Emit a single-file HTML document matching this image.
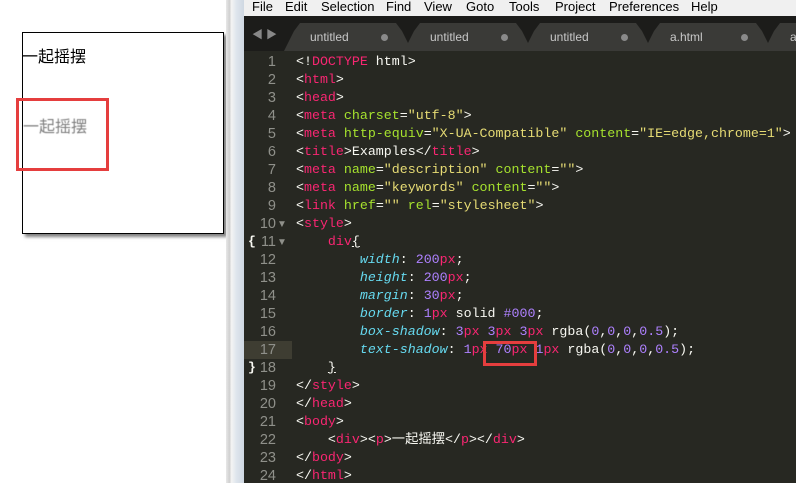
<!DOCTYPE html><html><head><meta charset="utf-8"><style>
body{margin:0;width:796px;height:483px;overflow:hidden;background:#fff;position:relative;font-family:"Liberation Sans","Noto Sans CJK SC",sans-serif}
.box{position:absolute;left:22px;top:32px;width:200px;height:200px;border:1px solid #000;box-shadow:3px 3px 3px rgba(0,0,0,.5)}
.t{position:absolute;left:22px;font-size:16px;line-height:20px}
.red{position:absolute;border:3px solid #e53e3e;box-sizing:border-box}
.frame{position:absolute;left:226px;top:0;width:18px;height:483px;background:linear-gradient(90deg,#e8e8e8,#cfcfcf 20%,#f4f4f4 30%,#dde4ec 60%,#cfd8e2)}
.menu{position:absolute;left:244px;top:0;right:0;height:16px;background:#f0f0f0;font-size:13px;line-height:14px;color:#000}
.menu span{position:absolute;top:0}
.tabs{position:absolute;left:244px;top:16px;right:0;height:35px;background:#1c1c1a}
.tab{position:absolute;top:7px;height:28px;width:128px;background:#3a3a37;clip-path:polygon(0 100%,10px 8px,16px 0,112px 0,118px 8px,128px 100%);color:#c8c8c8;font-size:12px;line-height:28px;padding-left:26px;box-sizing:border-box}
.tab:after{content:"";position:absolute;right:24px;top:11px;width:7px;height:7px;border-radius:50%;background:#8a8a8a}
.ed{position:absolute;left:244px;top:51px;right:0;bottom:0;background:#272822}
.ln{position:absolute;left:244px;width:32px;text-align:right;color:#8f908a;font:14.5px/18px "Liberation Sans",sans-serif}
.cd{position:absolute;left:296px;color:#f8f8f2;font:13.3px/18px "Liberation Mono","Noto Sans CJK SC",monospace;white-space:pre}
.g{color:#f92672}.a{color:#a6e22e}.s{color:#e6db74}.n{color:#ae81ff}.p{color:#66d9ef;font-style:italic}
</style></head><body>
<div class="box"></div>
<div class="t" style="top:48px">一起摇摆</div>
<div class="t" style="top:118px;color:transparent;text-shadow:1px 0 1px rgba(0,0,0,.5)">一起摇摆</div>
<div class="red" style="left:16px;top:98px;width:93px;height:73px"></div>
<div class="frame"></div>
<div class="menu"><span style="left:8px">File</span><span style="left:41px">Edit</span><span style="left:77px">Selection</span><span style="left:142px">Find</span><span style="left:180px">View</span><span style="left:222px">Goto</span><span style="left:265px">Tools</span><span style="left:311px">Project</span><span style="left:365px">Preferences</span><span style="left:447px">Help</span></div>
<div class="tabs">
<div style="position:absolute;left:8px;top:10px;color:#888;font-size:11px">◀ ▶</div>
<div class="tab" style="left:40px">untitled</div>
<div class="tab" style="left:160px">untitled</div>
<div class="tab" style="left:280px">untitled</div>
<div class="tab" style="left:400px">a.html</div>
<div class="tab" style="left:520px">a.html</div>
</div>
<div class="ed"></div>
<div style="position:absolute;left:244px;top:341px;width:48px;height:18px;background:#3e3d32"></div>
<div class="ln" style="top:53px">1<br>2<br>3<br>4<br>5<br>6<br>7<br>8<br>9<br>10<br>11<br>12<br>13<br>14<br>15<br>16<br>17<br>18<br>19<br>20<br>21<br>22<br>23<br>24</div>
<div style="position:absolute;left:277px;top:216px;color:#8f908a;font:10px/18px sans-serif">▼<br>▼</div>
<div style="position:absolute;left:248px;top:233px;color:#f8f8f2;font:bold 13px/18px monospace">{</div>
<div style="position:absolute;left:248px;top:359px;color:#f8f8f2;font:bold 13px/18px monospace">}</div>
<div class="cd" style="top:53px">&lt;!<span class="g">DOCTYPE</span> html&gt;
&lt;<span class="g">html</span>&gt;
&lt;<span class="g">head</span>&gt;
&lt;<span class="g">meta</span> <span class="a">charset</span>=<span class="s">"utf-8"</span>&gt;
&lt;<span class="g">meta</span> <span class="a">http-equiv</span>=<span class="s">"X-UA-Compatible"</span> <span class="a">content</span>=<span class="s">"IE=edge,chrome=1"</span>&gt;
&lt;<span class="g">title</span>&gt;Examples&lt;/<span class="g">title</span>&gt;
&lt;<span class="g">meta</span> <span class="a">name</span>=<span class="s">"description"</span> <span class="a">content</span>=<span class="s">""</span>&gt;
&lt;<span class="g">meta</span> <span class="a">name</span>=<span class="s">"keywords"</span> <span class="a">content</span>=<span class="s">""</span>&gt;
&lt;<span class="g">link</span> <span class="a">href</span>=<span class="s">""</span> <span class="a">rel</span>=<span class="s">"stylesheet"</span>&gt;
&lt;<span class="g">style</span>&gt;
    <span class="g">div</span><u>{</u>
        <span class="p">width</span>: <span class="n">200</span><span class="g">px</span>;
        <span class="p">height</span>: <span class="n">200</span><span class="g">px</span>;
        <span class="p">margin</span>: <span class="n">30</span><span class="g">px</span>;
        <span class="p">border</span>: <span class="n">1</span><span class="g">px</span> solid <span class="n">#000</span>;
        <span class="p">box-shadow</span>: <span class="n">3</span><span class="g">px</span> <span class="n">3</span><span class="g">px</span> <span class="n">3</span><span class="g">px</span> rgba(<span class="n">0</span>,<span class="n">0</span>,<span class="n">0</span>,<span class="n">0.5</span>);
        <span class="p">text-shadow</span>: <span class="n">1</span><span class="g">px</span> <span class="n">70</span><span class="g">px</span> <span class="n">1</span><span class="g">px</span> rgba(<span class="n">0</span>,<span class="n">0</span>,<span class="n">0</span>,<span class="n">0.5</span>);
    <u>}</u>
&lt;/<span class="g">style</span>&gt;
&lt;/<span class="g">head</span>&gt;
&lt;<span class="g">body</span>&gt;
    &lt;<span class="g">div</span>&gt;&lt;<span class="g">p</span>&gt;一起摇摆&lt;/<span class="g">p</span>&gt;&lt;/<span class="g">div</span>&gt;
&lt;/<span class="g">body</span>&gt;
&lt;/<span class="g">html</span>&gt;</div>
<div class="red" style="left:483px;top:341px;width:54px;height:25px"></div>
</body></html>
